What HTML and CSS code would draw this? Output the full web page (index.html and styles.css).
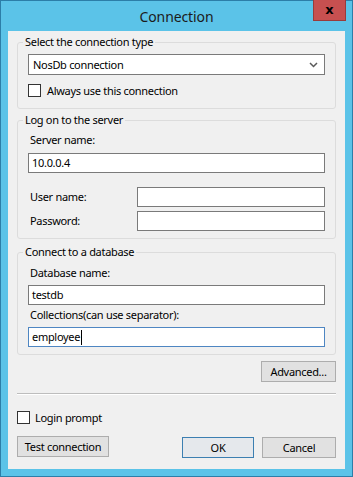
FILE: index.html
```html
<!DOCTYPE html>
<html>
<head>
<meta charset="utf-8">
<link rel="stylesheet" href="styles.css">
</head>
<body>
<div class="window">
  <div class="titlebar">
    <span class="title">Connection</span>
    <button class="close">x</button>
  </div>
  <div class="client">
    <fieldset class="group g1">
      <legend>Select the connection type</legend>
      <div class="select">
        <span>NosDb connection</span>
        <svg class="chev" width="9" height="6" viewBox="0 0 9 6"><path d="M1 1 L4.5 4.5 L8 1" fill="none" stroke="#5a5a5a" stroke-width="1.5"/></svg>
      </div>
      <label class="check always"><span class="box"></span>Always use this connection</label>
    </fieldset>

    <fieldset class="group g2">
      <legend>Log on to the server</legend>
      <div class="lbl">Server name:</div>
      <div class="input">10.0.0.4</div>
      <div class="row first"><span class="lbl">User name:</span><div class="input short"></div></div>
      <div class="row"><span class="lbl">Password:</span><div class="input short"></div></div>
    </fieldset>

    <fieldset class="group g3">
      <legend>Connect to a database</legend>
      <div class="lbl">Database name:</div>
      <div class="input">testdb</div>
      <div class="lbl lbl2">Collections(can use separator):</div>
      <div class="input focus">employee<span class="caret"></span></div>
    </fieldset>

    <div class="adv-row"><button class="btn adv">Advanced...</button></div>
    <div class="sep"></div>
    <label class="check login"><span class="box"></span>Login prompt</label>
    <div class="footer">
      <button class="btn test">Test connection</button>
      <div class="right">
        <button class="btn ok">OK</button>
        <button class="btn cancel">Cancel</button>
      </div>
    </div>
  </div>
</div>
</body>
</html>
```

FILE: styles.css
```css
* { box-sizing: border-box; }
html, body { margin: 0; padding: 0; }
body {
  font-family: "Segoe UI", "Noto Sans", sans-serif;
  font-size: 11px;
  letter-spacing: -0.3px;
  color: #000;
  background: #5bc3e8;
}
.window {
  width: 353px;
  height: 477px;
  background: #5bc3e8;
  border: 1px solid #2c7ea8;
  display: flex;
  flex-direction: column;
}
.titlebar {
  height: 30px;
  position: relative;
  display: flex;
  justify-content: center;
  align-items: center;
}
.title {
  font-size: 14px;
  letter-spacing: -0.1px;
  color: #1b1b1b;
  margin-top: 0;
}
.close {
  position: absolute;
  right: 6px;
  top: -1px;
  width: 33px;
  height: 21px;
  background: #c75050;
  border: 1px solid #9a3b3b;
  border-top: none;
  color: #000;
  font-family: "DejaVu Sans", sans-serif;
  font-weight: bold;
  font-size: 13px;
  line-height: 15px;
  padding: 0 0 2px;
}
.client {
  margin: 0 7px;
  height: 438px;
  background: #f0f0f0;
  padding: 3px 9px 0 9px;
  display: flex;
  flex-direction: column;
}
.group {
  margin: 0;
  border: 1px solid #dcdcdc;
  border-radius: 3px;
  padding: 4px 10px 8px 10px;
  min-width: 0;
}
.group legend {
  padding: 0 2px;
  margin-left: -5px;
  line-height: 16px;
  height: 16px;
}
.g1 { padding-bottom: 10px; }
.g2 { margin-top: 3px; padding-top: 4px; padding-bottom: 7px; }
.g3 { margin-top: 5px; padding-top: 5px; padding-bottom: 7px; }
.select {
  height: 21px;
  background: #fff;
  border: 1px solid #7a7a7a;
  display: flex;
  align-items: center;
  justify-content: space-between;
  padding: 0 6px 0 4px;
}
.chev { margin-top: 1px; }
.check {
  display: flex;
  align-items: center;
  height: 16px;
}
.box {
  width: 13px;
  height: 13px;
  border: 1px solid #333;
  background: #fff;
  margin-right: 6px;
}
.always { margin-top: 7px; }
.lbl {
  padding-left: 2px;
  line-height: 16px;
  height: 16px;
}
.input {
  height: 20px;
  background: #fff;
  border: 1px solid #7a7a7a;
  padding: 0 3px;
  line-height: 18px;
  display: flex;
  align-items: center;
}
.g2 > .lbl { margin-bottom: 5px; }
.row {
  display: flex;
  align-items: center;
  justify-content: space-between;
  margin-top: 4px;
}
.row.first { margin-top: 14px; }
.input.short { width: 188px; }
.g3 > .lbl { margin-bottom: 4px; }
.g3 > .lbl2 { margin-top: 2px; }
.input.focus { border-color: #4e86c2; }
.caret {
  display: inline-block;
  width: 1px;
  height: 15px;
  background: #000;
  margin-left: 1px;
}
.btn {
  font-family: inherit;
  font-size: 11px;
  letter-spacing: -0.3px;
  color: #000;
  background: #e1e1e1;
  border: 1px solid #adadad;
  height: 21px;
  padding: 0;
  line-height: 17px;
}
.adv-row {
  display: flex;
  justify-content: flex-end;
  margin-top: 6px;
}
.adv { width: 75px; }
.sep {
  margin-top: 11px;
  height: 2px;
  border-top: 1px solid #bdbdbd;
  border-bottom: 1px solid #fff;
}
.login { margin-top: 14px; margin-bottom: 0; }
.login .box { margin-right: 5px; }
.footer {
  display: flex;
  justify-content: space-between;
  margin-top: 11px;
}
.right { display: flex; gap: 8px; margin-top: 1px; }
.test { width: 92px; }
.ok { width: 72px; border-color: #3c7fb1; background: #e5e8ec; }
.cancel { width: 74px; }
```
